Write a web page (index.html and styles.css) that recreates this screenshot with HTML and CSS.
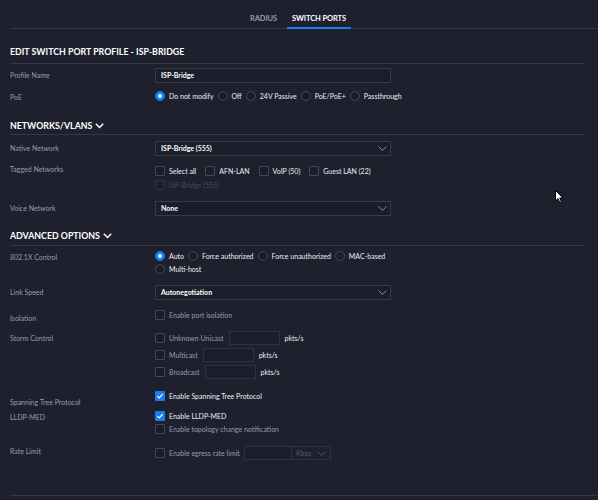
FILE: index.html
```html
<!DOCTYPE html>
<html>
<head>
<meta charset="utf-8">
<link rel="stylesheet" href="styles.css">
</head>
<body>
<div class="tabs">
  <div class="tab">RADIUS</div>
  <div class="tab active">SWITCH PORTS</div>
</div>
<div class="content">
  <h2 class="sec sec-edit">EDIT SWITCH PORT PROFILE - ISP-BRIDGE</h2>

  <div class="row row-profile">
    <div class="label lbl-15">Profile Name</div>
    <div class="ctrl"><div class="input">ISP-Bridge</div></div>
  </div>

  <div class="row row-poe">
    <div class="label lbl-10 off-1">PoE</div>
    <div class="ctrl opts radios">
      <span class="opt"><span class="radio on"></span>Do not modify</span>
      <span class="opt"><span class="radio"></span>Off</span>
      <span class="opt"><span class="radio"></span>24V Passive</span>
      <span class="opt"><span class="radio"></span>PoE/PoE+</span>
      <span class="opt"><span class="radio"></span>Passthrough</span>
    </div>
  </div>

  <h2 class="sec sec-net">NETWORKS/VLANS <svg class="sec-chev" width="9" height="6" viewBox="0 0 9 6"><polyline points="0.8,0.8 4.5,4.6 8.2,0.8" fill="none" stroke="#fff" stroke-width="1.4"/></svg></h2>

  <div class="row row-native">
    <div class="label lbl-15">Native Network</div>
    <div class="ctrl"><div class="input select">ISP-Bridge (555)<svg class="chev" width="9" height="5" viewBox="0 0 9 5"><polyline points="0.5,0.5 4.5,4.3 8.5,0.5" fill="none" stroke="#8c8e9c" stroke-width="1"/></svg></div></div>
  </div>

  <div class="row row-tagged">
    <div class="label lbl-10 up-2">Tagged Networks</div>
    <div class="ctrl opts checks">
      <span class="opt"><span class="cb"></span>Select all</span>
      <span class="opt"><span class="cb"></span>AFN-LAN</span>
      <span class="opt"><span class="cb"></span>VoIP (50)</span>
      <span class="opt"><span class="cb"></span>Guest LAN (22)</span>
      <span class="opt disabled"><span class="cb"></span>ISP-Bridge (555)</span>
    </div>
  </div>

  <div class="row row-voice">
    <div class="label lbl-15">Voice Network</div>
    <div class="ctrl"><div class="input select">None<svg class="chev" width="9" height="5" viewBox="0 0 9 5"><polyline points="0.5,0.5 4.5,4.3 8.5,0.5" fill="none" stroke="#8c8e9c" stroke-width="1"/></svg></div></div>
  </div>

  <h2 class="sec sec-adv">ADVANCED OPTIONS <svg class="sec-chev" width="9" height="6" viewBox="0 0 9 6"><polyline points="0.8,0.8 4.5,4.6 8.2,0.8" fill="none" stroke="#fff" stroke-width="1.4"/></svg></h2>

  <div class="row row-dot1x">
    <div class="label lbl-10 off-1">802.1X Control</div>
    <div class="ctrl opts radios">
      <span class="opt"><span class="radio on"></span>Auto</span>
      <span class="opt"><span class="radio"></span>Force authorized</span>
      <span class="opt"><span class="radio"></span>Force unauthorized</span>
      <span class="opt"><span class="radio"></span>MAC-based</span>
      <span class="opt"><span class="radio"></span>Multi-host</span>
    </div>
  </div>

  <div class="row row-speed">
    <div class="label lbl-15">Link Speed</div>
    <div class="ctrl"><div class="input select">Autonegotiation<svg class="chev" width="9" height="5" viewBox="0 0 9 5"><polyline points="0.5,0.5 4.5,4.3 8.5,0.5" fill="none" stroke="#8c8e9c" stroke-width="1"/></svg></div></div>
  </div>

  <div class="row row-isolation">
    <div class="label lbl-10 off-3">Isolation</div>
    <div class="ctrl opts"><span class="opt dim"><span class="cb"></span>Enable port isolation</span></div>
  </div>

  <div class="row row-storm">
    <div class="label lbl-14">Storm Control</div>
    <div class="ctrl storm">
      <div class="storm-line"><span class="opt dim"><span class="cb"></span>Unknown Unicast</span><span class="num"></span><span class="unit">pkts/s</span></div>
      <div class="storm-line"><span class="opt dim"><span class="cb"></span>Multicast</span><span class="num"></span><span class="unit">pkts/s</span></div>
      <div class="storm-line"><span class="opt dim"><span class="cb"></span>Broadcast</span><span class="num"></span><span class="unit">pkts/s</span></div>
    </div>
  </div>

  <div class="row row-stp">
    <div class="label lbl-10 off-6">Spanning Tree Protocol</div>
    <div class="ctrl opts"><span class="opt"><span class="cb on"><svg width="10" height="10" viewBox="0 0 10 10"><polyline points="2.4,5.2 4.2,7 7.6,3.2" fill="none" stroke="#fff" stroke-width="1.2"/></svg></span>Enable Spanning Tree Protocol</span></div>
  </div>

  <div class="row row-lldp">
    <div class="label lbl-10 off-1">LLDP-MED</div>
    <div class="ctrl opts stack">
      <span class="opt"><span class="cb on"><svg width="10" height="10" viewBox="0 0 10 10"><polyline points="2.4,5.2 4.2,7 7.6,3.2" fill="none" stroke="#fff" stroke-width="1.2"/></svg></span>Enable LLDP-MED</span>
      <span class="opt dim"><span class="cb"></span>Enable topology change notification</span>
    </div>
  </div>

  <div class="row row-rate">
    <div class="label lbl-14 up-2">Rate Limit</div>
    <div class="ctrl rate">
      <span class="opt dim"><span class="cb"></span>Enable egress rate limit</span>
      <span class="num num-rate"></span>
      <span class="unit-select">Kbps<svg class="chev" width="9" height="5" viewBox="0 0 9 5"><polyline points="0.5,0.5 4.5,4.3 8.5,0.5" fill="none" stroke="#4d4f5e" stroke-width="1"/></svg></span>
    </div>
  </div>

  <div class="footer-line"></div>
</div>

<svg class="cursor" width="10" height="14" viewBox="0 0 10 14"><path d="M0.5 0.5 L0.5 11 L3 8.6 L4.8 12.6 L6.4 11.9 L4.7 8 L8 8 Z" fill="#fff" stroke="#000" stroke-width="1"/></svg>
</body>
</html>
```

FILE: styles.css
```css
html, body {
  margin: 0;
  padding: 0;
}
body {
  background: #1e202e;
  font-family: Lato, "Noto Sans", sans-serif;
  font-size: 7px;
  color: #e4e5ea;
  width: 598px;
  height: 500px;
  overflow: hidden;
  position: relative;
}

/* tabs */
.tabs {
  margin-left: 10px;
  height: 29px;
  border-bottom: 1px solid #35384a;
  display: flex;
  padding-left: 235px;
  box-sizing: border-box;
}
.tab {
  padding: 14px 5px 3px;
  line-height: 10px;
  height: 10px;
  border-bottom: 2px solid transparent;
  color: #9a9cab;
  font-weight: 700;
  font-size: 7.5px;
  letter-spacing: -0.1px;
}
.tab + .tab { margin-left: 5px; }
.tab.active {
  color: #fff;
  border-bottom-color: #1b7cf0;
}

.content {
  margin-left: 10px;
  width: 574px;
}

/* section headings */
.sec {
  margin: 0;
  font-size: 8.8px;
  font-weight: 700;
  line-height: 12px;
  color: #fff;
  border-bottom: 1px solid #35384a;
  display: flex;
  align-items: center;
}
.sec-chev { margin-left: 3px; }
.sec-edit { padding: 17px 0 5px; }
.sec-net { padding: 18px 0 2px; }
.sec-adv { padding: 14px 0 3px; }

/* rows */
.row { display: flex; align-items: flex-start; }
.label {
  width: 145px;
  flex: none;
  color: #9a9cab;
}
.lbl-15 { line-height: 15px; }
.lbl-14 { line-height: 14px; }
.lbl-10 { line-height: 10px; }
.off-1 { padding-top: 1px; }
.off-3 { padding-top: 3px; }
.off-6 { padding-top: 6px; }
.up-2 { margin-top: -2px; }
.ctrl { width: 236px; }

.row-profile { margin-top: 4px; }
.row-poe { margin-top: 8px; }
.row-native { margin-top: 6px; }
.row-tagged { margin-top: 10px; }
.row-voice { margin-top: 11px; }
.row-dot1x { margin-top: 5px; }
.row-speed { margin-top: 11px; }
.row-isolation { margin-top: 10px; }
.row-storm { margin-top: 8px; }
.row-stp { margin-top: 12px; }
.row-lldp { margin-top: 4px; }
.row-rate { margin-top: 12px; }

/* inputs */
.input {
  height: 15px;
  box-sizing: border-box;
  border: 1px solid #383b4e;
  background: #1b1d2a;
  padding-left: 5px;
  line-height: 13px;
  color: #fff;
  font-weight: 700;
  position: relative;
}
.select { display: flex; justify-content: space-between; align-items: center; padding-right: 3px; }

/* options */
.opts {
  display: flex;
  flex-wrap: wrap;
  row-gap: 3px;
  align-items: center;
  align-content: flex-start;
}
.opt {
  display: inline-flex;
  align-items: center;
  height: 10px;
  line-height: 10px;
  white-space: nowrap;
  color: #eceef2;
}
.radios { width: 262px; }
.radios .opt { margin-right: 4px; }
.checks { row-gap: 4px; width: 248px; }
.checks .opt { margin-right: 9px; }
.opt.dim { color: #9a9cab; }
.opt.disabled { color: #4a4c5c; width: 100%; }
.opt.disabled .cb { border-color: #2f3242; background: #1e202e; }
.stack { flex-direction: column; align-items: flex-start; }

.radio {
  width: 10px;
  height: 10px;
  box-sizing: border-box;
  border-radius: 50%;
  border: 1px solid #45485a;
  background: #1b1d29;
  margin-right: 4px;
  flex: none;
  position: relative;
}
.radio.on {
  background: #1b7cf0;
  border-color: #1b7cf0;
}
.radio.on::after {
  content: "";
  position: absolute;
  left: 2px;
  top: 2px;
  width: 4px;
  height: 4px;
  border-radius: 50%;
  background: #fff;
}

.cb {
  width: 10px;
  height: 10px;
  box-sizing: border-box;
  border: 1px solid #45485a;
  border-radius: 1px;
  background: #1b1d29;
  margin-right: 4px;
  flex: none;
  display: flex;
}
.cb.on {
  background: #1b7cf0;
  border: none;
}
.cb svg { display: block; }

/* storm control */
.storm {
  display: flex;
  flex-direction: column;
  row-gap: 3px;
}
.storm-line {
  display: flex;
  align-items: center;
  height: 14px;
}
.num {
  width: 51px;
  height: 14px;
  box-sizing: border-box;
  border: 1px solid #2f3243;
  background: #1b1d2a;
  margin-left: 5px;
  flex: none;
}
.unit {
  margin-left: 5px;
  color: #eceef2;
}

/* rate limit */
.rate {
  display: flex;
  align-items: center;
  height: 14px;
}
.num-rate { width: 48px; margin-left: 4px; }
.unit-select {
  width: 39px;
  height: 14px;
  box-sizing: border-box;
  border: 1px solid #2f3243;
  border-left: none;
  display: flex;
  align-items: center;
  justify-content: space-between;
  padding: 0 4px 0 4px;
  color: #545666;
}

.footer-line {
  margin-top: 35px;
  border-top: 1px solid #35384a;
  width: 588px;
}

.cursor {
  position: absolute;
  left: 555px;
  top: 190px;
}
```
